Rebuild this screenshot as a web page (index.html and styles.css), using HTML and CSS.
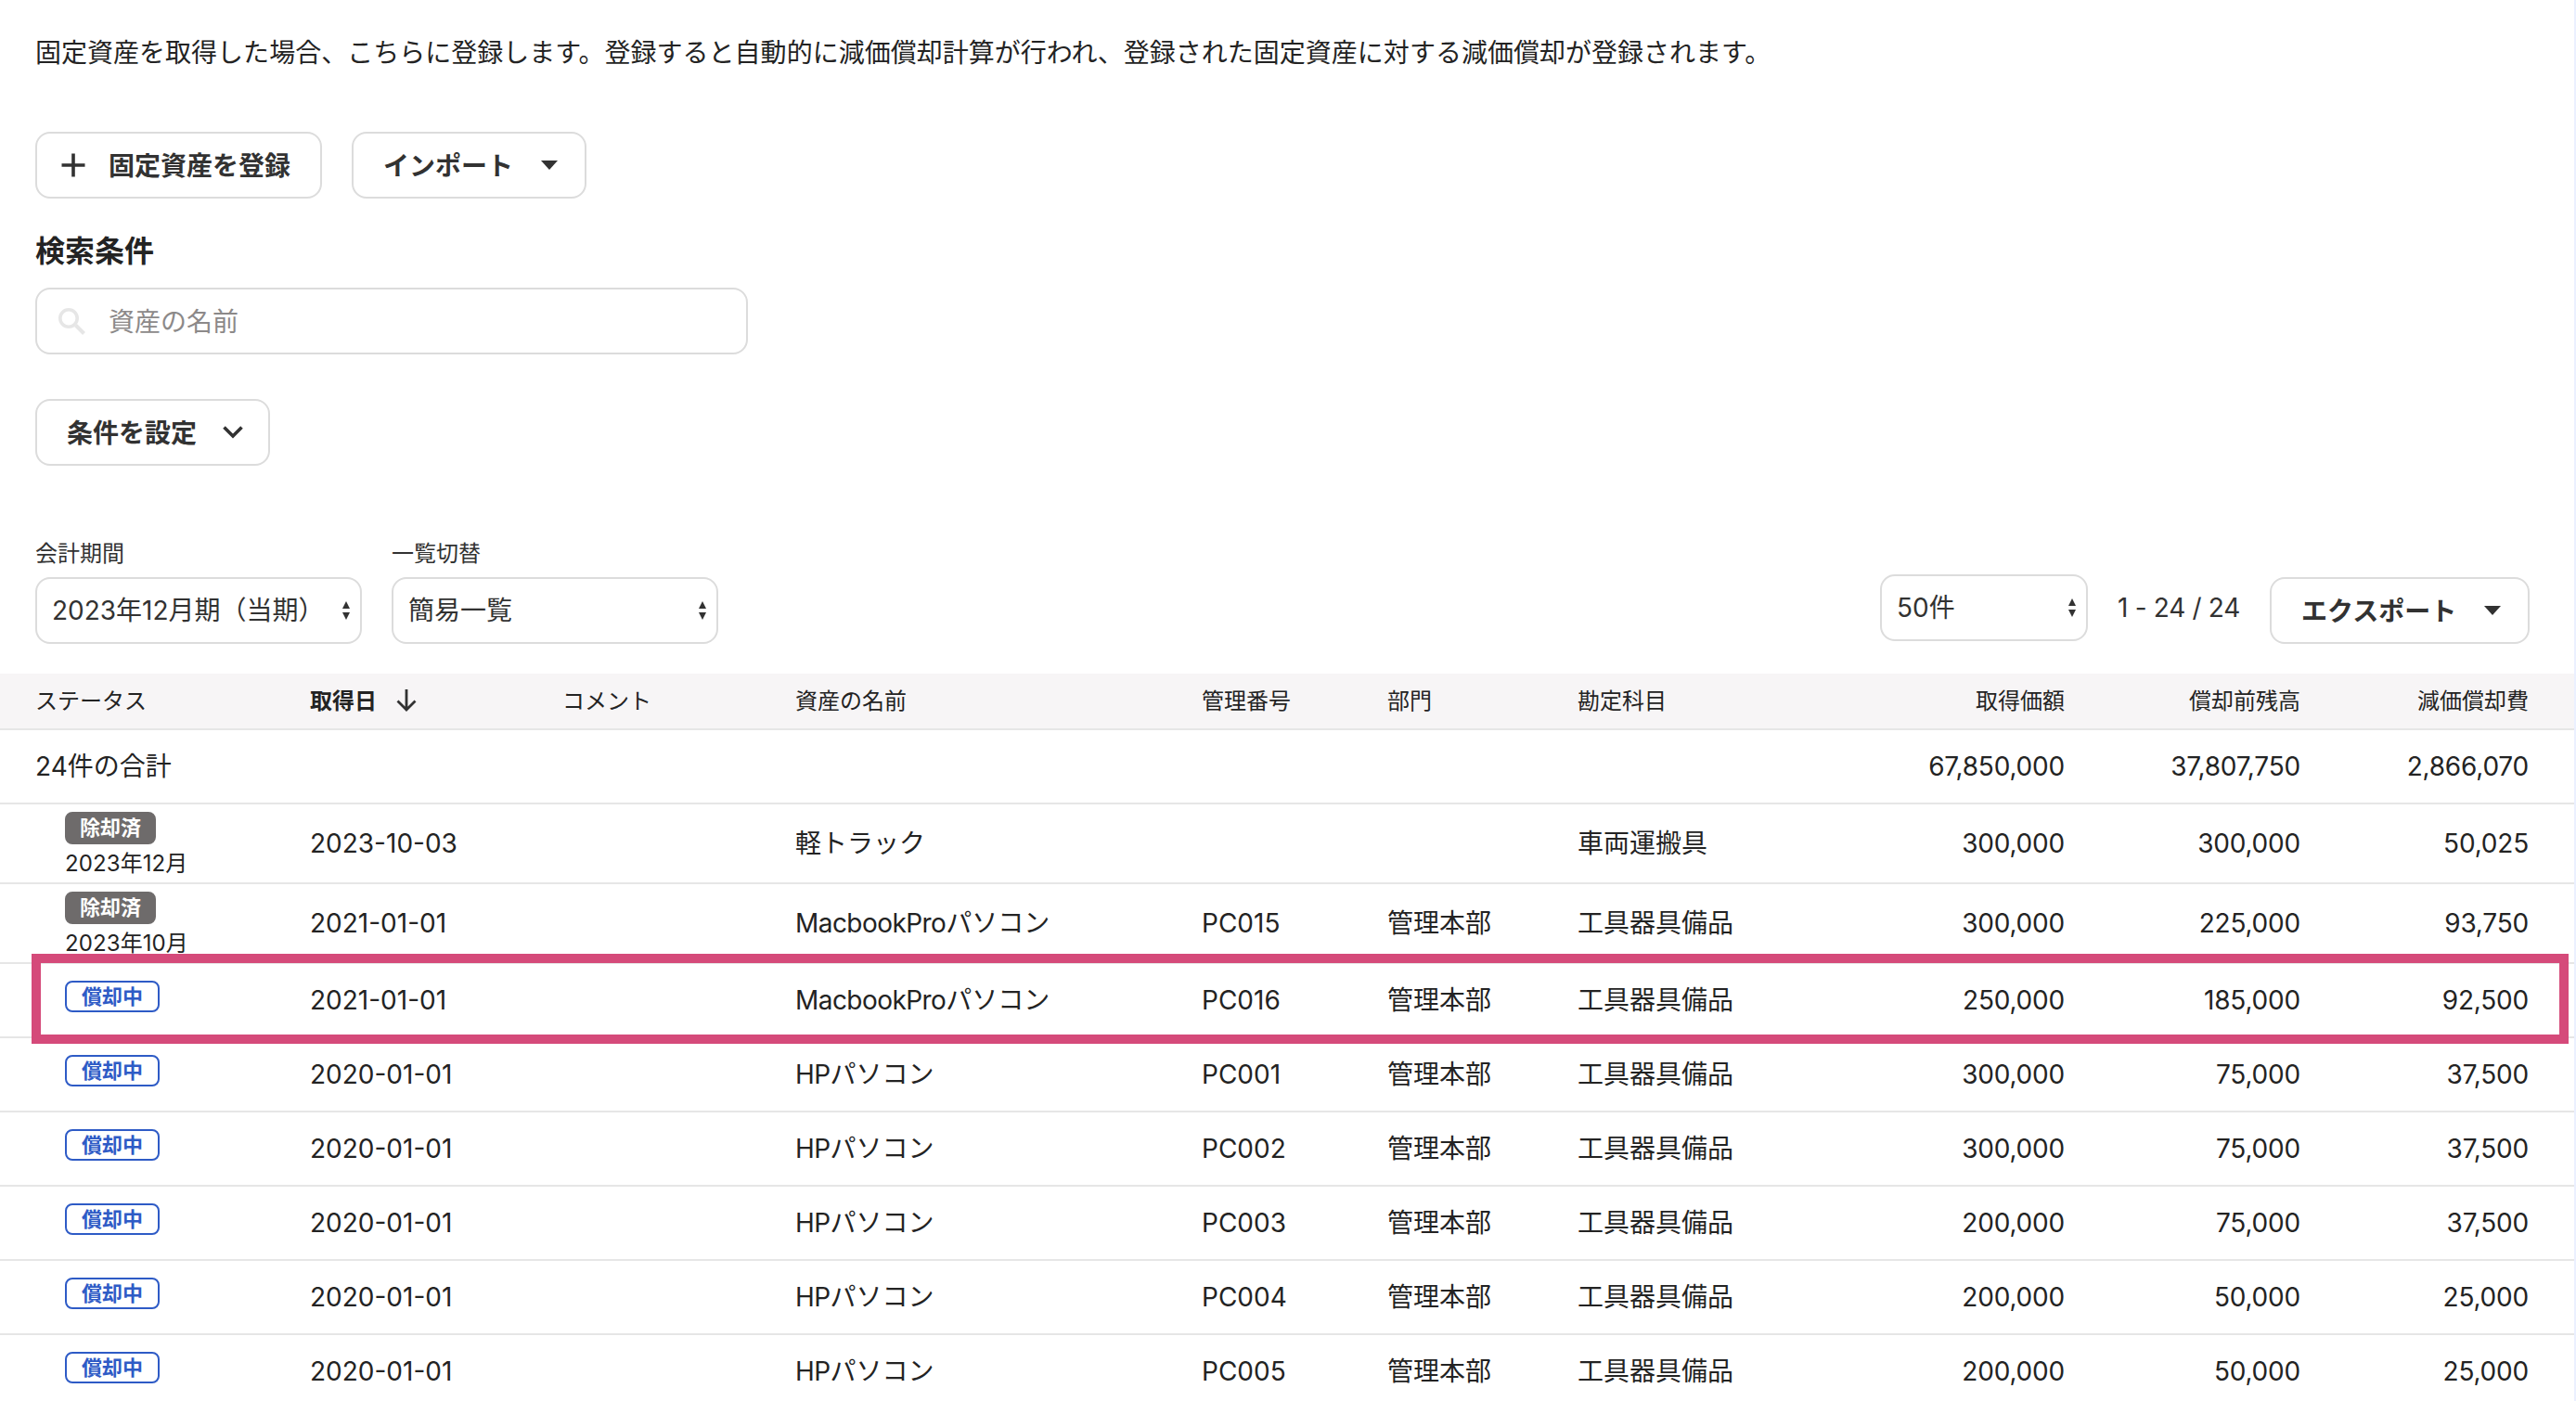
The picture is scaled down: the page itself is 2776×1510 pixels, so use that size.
FILE: index.html
```html
<!DOCTYPE html>
<html lang="ja">
<head>
<meta charset="utf-8">
<title>固定資産台帳</title>
<link rel="stylesheet" href="styles.css">
<script src="app.js" defer></script>
</head>
<body>
<main class="page">
  <p class="intro">固定資産を取得した場合、こちらに登録します。登録すると自動的に減価償却計算が行われ、登録された固定資産に対する減価償却が登録されます。</p>
  <div class="actions">
    <button class="btn btn-add"><svg class="ico" width="26" height="26" viewBox="0 0 26 26"><path d="M13 .5v25M.5 13h25" stroke="#323232" stroke-width="3.6"/></svg><span>固定資産を登録</span></button>
    <button class="btn btn-import"><span>インポート</span><svg width="18" height="10" viewBox="0 0 18 10"><path d="M0 0h18l-9 10z" fill="#323232"/></svg></button>
  </div>
  <h2 class="heading">検索条件</h2>
  <div class="search"><svg width="29" height="29" viewBox="0 0 29 29"><circle cx="11" cy="11" r="9.2" fill="none" stroke="#e6e6e6" stroke-width="3.6"/><path d="M18.5 18.5l9 9" stroke="#e6e6e6" stroke-width="4"/></svg><span>資産の名前</span></div>
  <button class="btn btn-cond"><span>条件を設定</span><svg width="22" height="14" viewBox="0 0 22 14"><path d="M1.5 1.5l9.5 9.5 9.5-9.5" fill="none" stroke="#323232" stroke-width="3.6"/></svg></button>
  <div class="toolbar">
    <div class="field"><span class="label">会計期間</span><div class="select"><span class="period">2023年12月期（当期）</span><svg width="8" height="20" viewBox="0 0 8 20"><path d="M0 8L4 0l4 8zM0 12h8l-4 8z" fill="#323232"/></svg></div></div>
    <div class="field"><span class="label">一覧切替</span><div class="select"><span>簡易一覧</span><svg width="8" height="20" viewBox="0 0 8 20"><path d="M0 8L4 0l4 8zM0 12h8l-4 8z" fill="#323232"/></svg></div></div>
    <div class="pager">
      <div class="select select-size"><span>50件</span><svg width="8" height="20" viewBox="0 0 8 20"><path d="M0 8L4 0l4 8zM0 12h8l-4 8z" fill="#323232"/></svg></div>
      <span class="range">1 - 24 / 24</span>
    </div>
    <button class="btn btn-export"><span>エクスポート</span><svg width="18" height="10" viewBox="0 0 18 10"><path d="M0 0h18l-9 10z" fill="#323232"/></svg></button>
  </div>
  <div class="table" id="table">
    <div class="row head">
      <span>ステータス</span>
      <span class="sorted">取得日<svg width="22" height="24" viewBox="0 0 22 24"><path d="M11 0v21.5M1.5 12.5l9.5 9.5 9.5-9.5" fill="none" stroke="#323232" stroke-width="2.8"/></svg></span>
      <span>コメント</span><span>資産の名前</span><span>管理番号</span><span>部門</span><span>勘定科目</span>
      <span class="num">取得価額</span><span class="num">償却前残高</span><span class="num">減価償却費</span>
    </div>
    <div class="row">
      <span class="total">24件の合計</span><span></span><span></span><span></span><span></span><span></span><span></span>
      <span class="num amount">67,850,000</span><span class="num amount">37,807,750</span><span class="num amount">2,866,070</span>
    </div>
  </div>
  <div class="highlight"></div>
</main>
</body>
</html>
```
FILE: styles.css
```css
* { box-sizing: border-box; }
body {
  margin: 0;
  background: #fff;
  color: #232323;
  font-family: Inter, "Noto Sans CJK JP", sans-serif;
  font-size: 28px;
  line-height: 40px;
}
.page {
  position: relative;
  height: 1510px;
  overflow: hidden;
  border-right: 2px solid #ebf0ff;
}
.intro { margin: 37px 38px 65px; white-space: nowrap; letter-spacing: 0.015px; }
.actions { display: flex; gap: 32px; margin-left: 38px; }
.btn {
  display: flex;
  align-items: center;
  height: 72px;
  padding: 0 32px;
  border: 2px solid #dcdcdc;
  border-radius: 16px;
  background: #fff;
  color: #323232;
  font: inherit;
  font-weight: 700;
  white-space: nowrap;
}
.btn span, .search span { padding-top: 2px; }
.btn-add { width: 309px; padding: 0 26px; gap: 25px; }
.btn-import { width: 253px; justify-content: space-between; padding-right: 29px; }
.heading { margin: 37px 38px 19px; font-size: 32px; line-height: 40px; font-weight: 700; }
.search {
  display: flex;
  align-items: center;
  gap: 25px;
  width: 768px;
  height: 72px;
  margin-left: 38px;
  padding: 0 23px;
  border: 2px solid #dcdcdc;
  border-radius: 16px;
  color: #8c8989;
}
.btn-cond { width: 253px; margin: 48px 0 0 38px; justify-content: space-between; padding-right: 27px; }
.toolbar { display: flex; align-items: flex-end; height: 192px; padding: 0 48px 0 38px; gap: 32px; color: #323232; }
.field { display: flex; flex-direction: column; gap: 7px; }
.label { font-size: 24px; line-height: 36px; }
.select {
  display: flex;
  align-items: center;
  justify-content: space-between;
  width: 352px;
  height: 72px;
  padding: 0 11px 0 16px;
  border: 2px solid #dcdcdc;
  border-radius: 16px;
  white-space: nowrap;
}
.pager { display: flex; align-items: center; gap: 32px; margin: 0 0 3px auto; white-space: nowrap; }
.range { letter-spacing: -0.3px; }
.select-size { width: 224px; }
.btn-export { width: 280px; justify-content: space-between; padding-right: 29px; }
.table { margin-top: 32px; }
.row {
  display: grid;
  grid-template-columns: 296px 272px 251px 438px 200px 205px 277px 248px 254px 246px;
  align-items: center;
  height: 80px;
  padding-left: 38px;
  border-bottom: 2px solid #e6e6e6;
  white-space: nowrap;
}
.head { height: 61px; background: #f7f5f6; font-size: 24px; }
.head > span { padding-top: 1px; }
.sorted { display: flex; align-items: center; gap: 21px; font-weight: 700; }
.sorted svg { margin-top: -3px; }
.num { text-align: right; }
.amount { letter-spacing: -0.2px; }
.latin { letter-spacing: -0.55px; }
.tall { height: 86px; }
.status { align-self: start; display: flex; flex-direction: column; align-items: flex-start; padding: 18px 0 0 32px; }
.tall .status { padding-top: 8px; }
.badge {
  height: 34px;
  padding: 0 16px;
  border: 2px solid #2e5bc6;
  border-radius: 8px;
  color: #2e5bc6;
  font-size: 22px;
  line-height: 31px;
  font-weight: 700;
}
.badge-done { height: 35px; padding: 0 14px; border-color: #6e6b6b; background: #6e6b6b; color: #fff; }
.month { font-size: 24px; line-height: 36px; margin-top: 3px; letter-spacing: 0.1px; }
.highlight {
  position: absolute;
  left: 34px;
  top: 1028px;
  width: 2734px;
  height: 97px;
  border: 10px solid #d54a7a;
}
```
FILE: app.js
```js
const assets = [
  ["2023年12月", "2023-10-03", "軽トラック", "", "", "車両運搬具", "300,000", "300,000", "50,025"],
  ["2023年10月", "2021-01-01", "MacbookProパソコン", "PC015", "管理本部", "工具器具備品", "300,000", "225,000", "93,750"],
  ["", "2021-01-01", "MacbookProパソコン", "PC016", "管理本部", "工具器具備品", "250,000", "185,000", "92,500"],
  ["", "2020-01-01", "HPパソコン", "PC001", "管理本部", "工具器具備品", "300,000", "75,000", "37,500"],
  ["", "2020-01-01", "HPパソコン", "PC002", "管理本部", "工具器具備品", "300,000", "75,000", "37,500"],
  ["", "2020-01-01", "HPパソコン", "PC003", "管理本部", "工具器具備品", "200,000", "75,000", "37,500"],
  ["", "2020-01-01", "HPパソコン", "PC004", "管理本部", "工具器具備品", "200,000", "50,000", "25,000"],
  ["", "2020-01-01", "HPパソコン", "PC005", "管理本部", "工具器具備品", "200,000", "50,000", "25,000"]
];
const table = document.getElementById("table");
for (const [month, date, name, code, dept, account, cost, balance, expense] of assets) {
  const status = month
    ? `<b class="badge badge-done">除却済</b><span class="month">${month}</span>`
    : `<b class="badge">償却中</b>`;
  const label = name.replace(/^[A-Za-z]+/, (word) => `<span class="latin">${word}</span>`);
  table.insertAdjacentHTML("beforeend",
    `<div class="row${month ? " tall" : ""}"><div class="status">${status}</div>` +
    `<span>${date}</span><span></span><span>${label}</span><span>${code}</span><span>${dept}</span><span>${account}</span>` +
    `<span class="num amount">${cost}</span><span class="num amount">${balance}</span><span class="num amount">${expense}</span></div>`);
}
```
